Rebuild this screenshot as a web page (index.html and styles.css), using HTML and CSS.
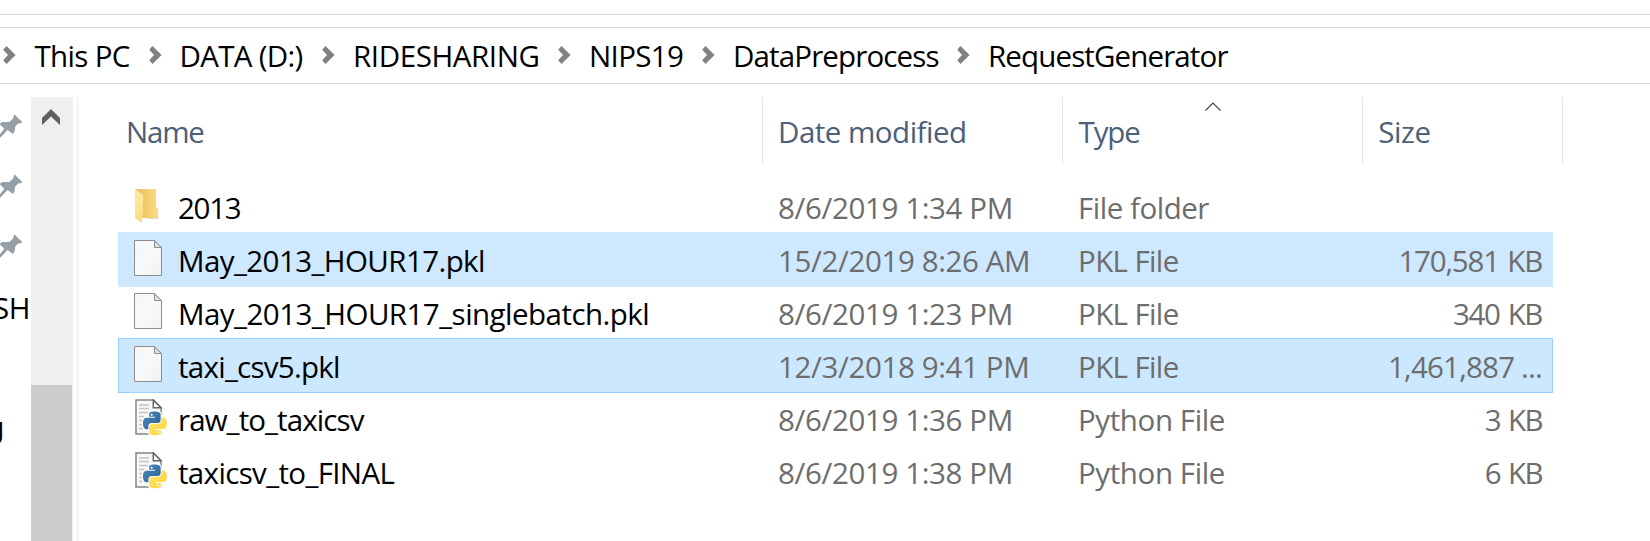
FILE: index.html
```html
<!DOCTYPE html>
<html lang="en">
<head>
<meta charset="utf-8">
<title>RequestGenerator</title>
<link rel="stylesheet" href="styles.css">
</head>
<body>
<svg class="defs" width="0" height="0" aria-hidden="true">
  <defs>
    <linearGradient id="paper" x1="0" y1="0" x2="1" y2="1"><stop offset="0" stop-color="#f5f6f7"/><stop offset=".5" stop-color="#f8f9fa"/><stop offset="1" stop-color="#eff1f3"/></linearGradient>
    <linearGradient id="fold-back" x1="0" y1="0" x2="1" y2="0"><stop offset="0" stop-color="#e9bf5c"/><stop offset="1" stop-color="#fbdc80"/></linearGradient>
    <linearGradient id="fold-front" x1="0" y1="0" x2="0" y2="1"><stop offset="0" stop-color="#ffe9a4"/><stop offset="1" stop-color="#fcdb7b"/></linearGradient>
    <linearGradient id="py-blue" x1="0" y1="0" x2="1" y2="1"><stop offset="0" stop-color="#4a8cc2"/><stop offset="1" stop-color="#2b608f"/></linearGradient>
    <linearGradient id="py-yellow" x1="1" y1="1" x2="0" y2="0"><stop offset="0" stop-color="#ffe878"/><stop offset="1" stop-color="#ffd02e"/></linearGradient>
    <path id="snake" d="M14.25.18l.9.2.73.26.59.3.45.32.34.34.25.34.16.33.1.3.04.26.02.2-.01.13V8.5l-.05.63-.13.55-.21.46-.26.38-.3.31-.33.25-.35.19-.35.14-.33.1-.3.07-.26.04-.21.02H8.77l-.69.05-.59.14-.5.22-.41.27-.33.32-.27.35-.2.36-.15.37-.1.35-.07.32-.04.27-.02.21v3.06H3.17l-.21-.03-.28-.07-.32-.12-.35-.18-.36-.26-.36-.36-.35-.46-.32-.59-.28-.73-.21-.88-.14-1.05-.05-1.23.06-1.22.16-1.04.24-.87.32-.71.36-.57.4-.44.42-.33.42-.24.4-.16.36-.1.32-.05.24-.01h.16l.06.01h8.16v-.83H6.18l-.01-2.75-.02-.37.05-.34.11-.31.17-.28.25-.26.31-.23.38-.2.44-.18.51-.15.58-.12.64-.1.71-.06.77-.04.84-.02 1.27.05z"/>
    <symbol id="chevron" viewBox="0 0 13 18"><path d="M3.5 0 12.6 9 3.5 18 .2 14.2 5 9 .2 3.8z" fill="#808080"/></symbol>
    <symbol id="pin" viewBox="0 0 24 26"><path d="M14.4 .3 22.4 8.2 20 9.4l-1.600-.2-3.200 3.400-.5 4.500-1.700 3L7.600 16.100 0 23.900V20.300L4.300 14.700 0 10.500V9.600l2.500-1.500 6.800-.1 3.700-3.600z" fill="#949fa6"/></symbol>
    <symbol id="file" viewBox="0 0 28 36"><path d="M.5 .5H20.500L27.500 7.500V35.500H.5z" fill="url(#paper)" stroke="#8d8d8d"/><path d="M20.500 1V7.500H27.500z" fill="#e2e4e6" stroke="#8d8d8d"/></symbol>
    <symbol id="folder" viewBox="0 0 26 36"><path d="M13 29.500h12" stroke="#ddd" stroke-width="1"/><path d="M1 0H22V18l2 2V29H8z" fill="url(#fold-back)"/><path d="M1 0 9 6V25L8 26V34L1 29z" fill="url(#fold-front)"/></symbol>
    <symbol id="python" viewBox="0 0 34 40">
      <path d="M2 1H19.500L27 8.500V35H2z" fill="#f6f7f8" stroke="#858585" stroke-width="1.500"/>
      <path d="M19.300 1V8.700H27z" fill="#fff" stroke="#666" stroke-width="1.500"/>
      <path d="M5 6h10M5 9.500h10M5 13.500h9M5 17.500h5M5 21.500h3M5 25.500h4M5 29.500h4" stroke="#c4c4c4" stroke-width="1.400"/>
      <g transform="translate(9 12.500) scale(.99)">
        <g fill="#fff" stroke="#fff" stroke-width="2.400"><use href="#snake"/><use href="#snake" transform="rotate(180 12 12)"/></g>
        <use href="#snake" fill="url(#py-blue)"/>
        <use href="#snake" transform="rotate(180 12 12)" fill="url(#py-yellow)"/>
        <circle cx="8.800" cy="3.200" r="1.050" fill="#fff"/><circle cx="15.200" cy="20.800" r="1.050" fill="#fff"/>
      </g>
    </symbol>
  </defs>
</svg>

<main class="window">
  <nav class="address">
    <div class="crumb crumb-pc"><svg class="chevron"><use href="#chevron"/></svg><span>This PC</span></div>
    <div class="crumb crumb-data"><svg class="chevron"><use href="#chevron"/></svg><span>DATA (D:)</span></div>
    <div class="crumb crumb-ride"><svg class="chevron"><use href="#chevron"/></svg><span>RIDESHARING</span></div>
    <div class="crumb crumb-nips"><svg class="chevron"><use href="#chevron"/></svg><span>NIPS19</span></div>
    <div class="crumb crumb-prep"><svg class="chevron"><use href="#chevron"/></svg><span>DataPreprocess</span></div>
    <div class="crumb crumb-req"><svg class="chevron"><use href="#chevron"/></svg><span>RequestGenerator</span></div>
  </nav>
  <div class="content">
    <aside class="tree">
      <div class="tree-item"><svg class="pin"><use href="#pin"/></svg></div>
      <div class="tree-item"><svg class="pin"><use href="#pin"/></svg></div>
      <div class="tree-item"><svg class="pin"><use href="#pin"/></svg></div>
      <div class="tree-item tree-text">SH</div>
      <div class="tree-item"></div>
      <div class="tree-item tree-text tree-tail">g</div>
    </aside>
    <div class="scrollbar">
      <svg class="scroll-up" viewBox="0 0 18 16"><path d="M9 0 18 9V16L9 7.500 0 16V9z" fill="#606060"/></svg>
      <div class="thumb"></div>
    </div>
    <div class="splitter"></div>
    <section class="list">
      <header class="head">
        <div class="th th-name">Name</div>
        <div class="th th-date">Date modified</div>
        <div class="th th-type">Type<svg class="sort" viewBox="0 0 16 9"><path d="M.5 8.500 8 1l7.500 7.500" fill="none" stroke="#444" stroke-width="1.200"/></svg></div>
        <div class="th th-size">Size</div>
      </header>
      <div class="row"><svg class="icon icon-folder"><use href="#folder"/></svg><span class="name n-year">2013</span><span class="date">8/6/2019 1:34 PM</span><span class="type">File folder</span><span class="size"></span></div>
      <div class="row selected"><svg class="icon icon-file"><use href="#file"/></svg><span class="name n-hour">May_2013_HOUR17.pkl</span><span class="date">15/2/2019 8:26 AM</span><span class="type t-pkl">PKL File</span><span class="size">170,581 KB</span></div>
      <div class="row"><svg class="icon icon-file"><use href="#file"/></svg><span class="name n-batch">May_2013_HOUR17_singlebatch.pkl</span><span class="date">8/6/2019 1:23 PM</span><span class="type t-pkl">PKL File</span><span class="size s-short">340 KB</span></div>
      <div class="row selected focused"><svg class="icon icon-file"><use href="#file"/></svg><span class="name n-taxi">taxi_csv5.pkl</span><span class="date">12/3/2018 9:41 PM</span><span class="type t-pkl">PKL File</span><span class="size s-long">1,461,887 ...</span></div>
      <div class="row"><svg class="icon icon-python"><use href="#python"/></svg><span class="name n-raw">raw_to_taxicsv</span><span class="date">8/6/2019 1:36 PM</span><span class="type t-py">Python File</span><span class="size s-tiny">3 KB</span></div>
      <div class="row"><svg class="icon icon-python"><use href="#python"/></svg><span class="name n-final">taxicsv_to_FINAL</span><span class="date">8/6/2019 1:38 PM</span><span class="type t-py">Python File</span><span class="size s-tiny">6 KB</span></div>
    </section>
  </div>
</main>
</body>
</html>
```
FILE: styles.css
```css
* { box-sizing: border-box; }
body {
  margin: 0;
  background: #fff;
  color: #000;
  font: 29.5px/55px "Open Sans", "Noto Sans", sans-serif;
  overflow: hidden;
}
.defs { display: block; }
.window { height: 541px; padding-top: 14px; display: flex; flex-direction: column; overflow: hidden; }
.window::before { content: ""; flex: none; height: 12px; border-top: 1px solid #d9d9d9; }

.address {
  flex: none;
  display: flex;
  height: 57px;
  padding-left: 3px;
  border-top: 1px solid #d9d9d9;
  border-bottom: 1px solid #d9d9d9;
  white-space: nowrap;
}
.crumb { flex: none; display: flex; }
.chevron { flex: none; width: 13px; height: 18px; margin: 17.5px 18px 0 0; }
.crumb-pc { width: 145.5px; letter-spacing: -.65px; }
.crumb-pc .chevron { margin-right: 18.5px; }
.crumb-data { width: 173.5px; letter-spacing: -.68px; }
.crumb-ride { width: 236px; letter-spacing: -.4px; }
.crumb-nips { width: 144px; letter-spacing: -.65px; }
.crumb-prep { width: 255px; letter-spacing: -.86px; }
.crumb-req { letter-spacing: -.87px; }

.content { flex: 1; display: flex; padding-top: 13px; min-height: 0; }
.tree { flex: none; width: 31px; overflow: hidden; }
.tree-item { height: 60px; padding-top: 17px; display: flex; }
.pin { width: 24px; height: 26px; }
.tree-text { padding: 3px 1px 0 0; justify-content: flex-end; letter-spacing: -.5px; }
.tree-tail { padding-right: 27.5px; font-family: "Liberation Sans", sans-serif; }

.scrollbar { flex: none; width: 42px; background: #efefef; display: flex; flex-direction: column; }
.scroll-up { width: 18px; height: 16px; margin: 12px 0 0 11px; }
.thumb { flex: 1; width: 41px; margin-top: 260px; background: #cdcdcd; }
.splitter { flex: none; width: 3px; margin-left: 3px; background: #f7f7f7; }

.list { flex: none; width: 1474px; padding-left: 39px; }
.head { display: grid; grid-template-columns: 645px 300px 300px 200px; height: 67px; color: #4c607a; line-height: 67px; }
.th { position: relative; padding: 1px 0 0 15px; border-right: 1px solid #e5e5e5; height: 67px; }
.th-name { padding-left: 8px; letter-spacing: -1.2px; }
.th-date { letter-spacing: -.5px; }
.th-type { padding-left: 15.5px; letter-spacing: -1.1px; }
.th-size { padding-left: 15.3px; letter-spacing: -.4px; }
.sort { position: absolute; left: 142px; top: 5px; width: 16px; height: 9px; }

.row {
  display: grid;
  grid-template-columns: 44px 600px 300px 280px 184px;
  width: 1435px;
  height: 55px;
  margin-bottom: -2px;
  padding: 1px 0 0 16px;
  white-space: nowrap;
}
.head + .row { margin-top: 15px; }
.selected { background: #cde8ff; }
.focused { background: #cce8ff; box-shadow: inset 0 0 0 1px #99d1ff; }
.icon-file { width: 28px; height: 36px; margin-top: 7px; }
.icon-folder { width: 26px; height: 36px; margin-top: 9px; }
.icon-python { width: 34px; height: 40px; margin-top: 7px; }
.date, .type, .size { color: #6d6d6d; }
.date { letter-spacing: -.37px; }
.type { letter-spacing: -.48px; }
.t-pkl { letter-spacing: -.62px; }
.t-py { letter-spacing: -.4px; }
.size { text-align: right; letter-spacing: -1.2px; word-spacing: 2px; }
.s-short { letter-spacing: -1.4px; }
.s-long { letter-spacing: -.79px; word-spacing: 0; }
.s-tiny { letter-spacing: -1.6px; }
.n-year { letter-spacing: -1.3px; }
.n-hour { letter-spacing: -.58px; }
.n-batch { letter-spacing: -.53px; }
.n-taxi { letter-spacing: -.73px; }
.n-raw { letter-spacing: -.9px; }
.n-final { letter-spacing: -.65px; }
```
